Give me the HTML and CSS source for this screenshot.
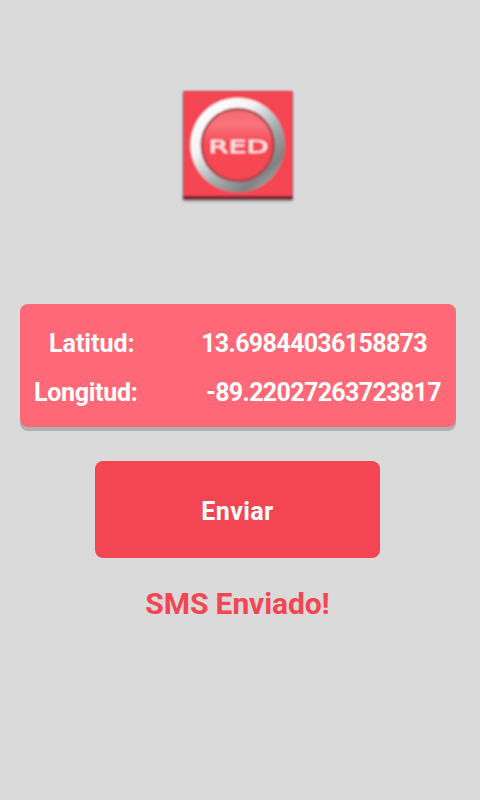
FILE: index.html
```
<!DOCTYPE html>
<html lang="es">
<head>
  <meta charset="UTF-8">
  <title>Red</title>
  <link rel="stylesheet" href="styles.css">
</head>
<body>

<div class="screen">
  <svg class="logo" width="124" height="124" viewBox="0 0 124 124">
    <defs>
      <linearGradient id="ring" x1="0.15" y1="0.1" x2="0.85" y2="0.9">
        <stop offset="0" stop-color="#ffffff"/>
        <stop offset="0.3" stop-color="#f2f3f3"/>
        <stop offset="0.6" stop-color="#a9afaf"/>
        <stop offset="0.88" stop-color="#7d8181"/>
        <stop offset="1" stop-color="#a0a4a4"/>
      </linearGradient>
      <linearGradient id="button" x1="0" y1="0" x2="0" y2="1">
        <stop offset="0" stop-color="#f66870"/>
        <stop offset="0.22" stop-color="#fa747c"/>
        <stop offset="0.5" stop-color="#f54853"/>
        <stop offset="1" stop-color="#f74652"/>
      </linearGradient>
      <filter id="soft" x="-10%" y="-10%" width="120%" height="120%">
        <feGaussianBlur stdDeviation="1.6"/>
      </filter>
      <filter id="edge" x="-5%" y="-5%" width="110%" height="110%">
        <feGaussianBlur stdDeviation="0.8"/>
      </filter>
    </defs>
    <rect x="7" y="8" width="109.5" height="109" fill="#000" opacity="0.4" filter="url(#soft)"/>
    <g filter="url(#edge)">
      <rect x="7.5" y="7" width="109" height="108" fill="#f44552"/>
      <rect x="7.5" y="112" width="109" height="3" fill="#7c1f29"/>
      <circle cx="61.7" cy="61" r="47.3" fill="url(#ring)"/>
      <circle cx="61.7" cy="61" r="36" fill="url(#button)" stroke="#a8434b" stroke-width="2.5"/>
      <text class="logo-text" x="32.5" y="69" textLength="60" lengthAdjust="spacingAndGlyphs">RED</text>
    </g>
  </svg>

  <div class="card">
    <div class="row latitude">
      <span>Latitud:</span>
      <span class="value">13.69844036158873</span>
    </div>
    <div class="row longitude">
      <span class="label">Longitud:</span>
      <span class="value">-89.22027263723817</span>
    </div>
  </div>

  <button class="send">Enviar</button>

  <p class="status">SMS Enviado!</p>
</div>

</body>
</html>
```

FILE: styles.css
```
body {
  margin: 0;
  background: #dadada;
  font-family: Roboto, Arial, sans-serif;
  font-weight: bold;
}

.screen {
  display: flex;
  flex-direction: column;
  align-items: center;
  box-sizing: border-box;
  width: 476px;
  height: 800px;
  padding-top: 84px;
}

.logo {
  display: block;
}

.logo-text {
  font-family: "DejaVu Sans", sans-serif;
  font-size: 18px;
  font-weight: normal;
  fill: #ffe6e8;
  stroke: #ffe6e8;
  stroke-width: 0.5px;
}

.card {
  box-sizing: border-box;
  width: 436px;
  height: 123px;
  margin-top: 96px;
  padding-top: 15px;
  border-radius: 8px;
  background: #ff6876;
  box-shadow: 0 4px 0 #b0b0b0;
  color: #fff;
  font-size: 25px;
  line-height: 49px;
}

.row {
  display: flex;
  justify-content: space-between;
}

.latitude {
  padding: 0 29px;
}

.longitude {
  padding: 0 15px 0 14px;
}

.label {
  letter-spacing: -0.3px;
}

.value {
  letter-spacing: -0.64px;
}

.send {
  width: 285px;
  height: 97px;
  margin: 34px 1px 0 0;
  padding: 4px 0 0;
  border: none;
  border-radius: 8px;
  background: #f44552;
  color: #fff;
  font-family: Roboto, Arial, sans-serif;
  font-size: 25px;
  font-weight: bold;
  letter-spacing: 0.4px;
}

.status {
  margin: 28px 1px 0 0;
  color: #f44552;
  font-size: 30px;
  line-height: 36px;
  letter-spacing: -0.1px;
}
```
